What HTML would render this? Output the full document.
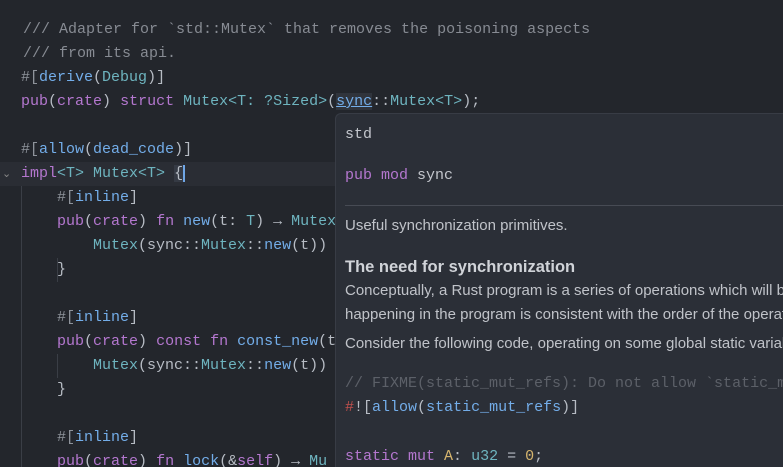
<html style="overflow:hidden;height:467px"><head><style>
body{margin:0;width:783px;height:467px;background:#23262c;overflow:hidden;position:relative;font-family:"Liberation Mono",monospace;font-size:15px;color:#c9ccd2}
.l{position:absolute;left:21px;height:24px;line-height:24px;white-space:pre}
.k{color:#b477cf}.t{color:#6eb4bf}.f{color:#73ade9}.c{color:#878b93}.a{color:#8e939b}.p{color:#b7bcc4}
.hl{position:absolute;left:0;top:162px;width:783px;height:24px;background:#2a2d34}
.g{position:absolute;width:1px;background:#3a3e46}
#pop{position:absolute;left:335px;top:113px;width:447px;height:354px;background:#2b2f37;border:1px solid #383c45;border-bottom:none;border-right:none;border-radius:6px 0 0 0;color:#c3c6cc;overflow:hidden}
#pop .m{position:absolute;left:9px;white-space:pre;line-height:24px}
#pop .s{position:absolute;left:9px;white-space:pre;font-family:"Liberation Sans",sans-serif;font-size:15px;line-height:24px;color:#c0c3c9}
</style></head><body>
<div class="hl"></div>
<div class="g" style="left:21px;top:186px;height:281px"></div>
<div class="g" style="left:57px;top:258px;height:24px"></div>
<div class="g" style="left:57px;top:354px;height:24px"></div>
<div style="position:absolute;left:2px;top:167px;color:#888;font-size:11px">⌄</div>
<div class="l c" style="top:18px;left:23px">/// Adapter for `std::Mutex` that removes the poisoning aspects</div>
<div class="l c" style="top:42px;left:23px">/// from its api.</div>
<div class="l" style="top:66px"><span class="a">#[</span><span class="f">derive</span><span class="p">(</span><span class="t">Debug</span><span class="p">)]</span></div>
<div class="l" style="top:90px"><span class="k">pub</span><span class="p">(</span><span class="k">crate</span><span class="p">) </span><span class="k">struct</span> <span class="t">Mutex&lt;T: ?Sized&gt;</span><span class="p">(</span><span style="text-decoration:underline;background:#30343c" class="f">sync</span><span class="p">::</span><span class="t">Mutex&lt;T&gt;</span><span class="p">);</span></div>
<div class="l" style="top:138px"><span class="a">#[</span><span class="f">allow</span><span class="p">(</span><span class="f">dead_code</span><span class="p">)]</span></div>
<div class="l" style="top:162px"><span class="k">impl</span><span class="t">&lt;T&gt; Mutex&lt;T&gt;</span> <span class="p" style="background:#353a44;border-right:2px solid #6fa6e6">{</span></div>
<div class="l" style="top:186px;left:57px"><span class="a">#[</span><span class="f">inline</span><span class="p">]</span></div>
<div class="l" style="top:210px;left:57px"><span class="k">pub</span><span class="p">(</span><span class="k">crate</span><span class="p">) </span><span class="k">fn</span> <span class="f">new</span><span class="p">(t: </span><span class="t">T</span><span class="p">) → </span><span class="t">Mutex</span></div>
<div class="l" style="top:234px;left:93px"><span class="t">Mutex</span><span class="p">(sync::</span><span class="t">Mutex</span><span class="p">::</span><span class="f">new</span><span class="p">(t))</span></div>
<div class="l p" style="top:258px;left:57px">}</div>
<div class="l" style="top:306px;left:57px"><span class="a">#[</span><span class="f">inline</span><span class="p">]</span></div>
<div class="l" style="top:330px;left:57px"><span class="k">pub</span><span class="p">(</span><span class="k">crate</span><span class="p">) </span><span class="k">const fn</span> <span class="f">const_new</span><span class="p">(t</span></div>
<div class="l" style="top:354px;left:93px"><span class="t">Mutex</span><span class="p">(sync::</span><span class="t">Mutex</span><span class="p">::</span><span class="f">new</span><span class="p">(t))</span></div>
<div class="l p" style="top:378px;left:57px">}</div>
<div class="l" style="top:426px;left:57px"><span class="a">#[</span><span class="f">inline</span><span class="p">]</span></div>
<div class="l" style="top:450px;left:57px;height:17px;overflow:hidden"><span class="k">pub</span><span class="p">(</span><span class="k">crate</span><span class="p">) </span><span class="k">fn</span> <span class="f">lock</span><span class="p">(&amp;</span><span class="k">self</span><span class="p">) → </span><span class="t">Mu</span></div>
<div id="pop">
<div class="m" style="top:9px">std</div>
<div class="m" style="top:50px"><span class="k">pub mod</span> sync</div>
<div style="position:absolute;left:9px;right:0;top:91px;height:1px;background:#474b54"></div>
<div class="s" style="top:100px">Useful synchronization primitives.</div>
<div class="s" style="top:141px;font-weight:bold;font-size:16.5px;color:#d0d3d8">The need for synchronization</div>
<div class="s" style="top:165px">Conceptually, a Rust program is a series of operations which will be</div>
<div class="s" style="top:189px">happening in the program is consistent with the order of the operations</div>
<div class="s" style="top:218px">Consider the following code, operating on some global static variables</div>
<div class="m c" style="top:258px;color:#5c6068">// FIXME(static_mut_refs): Do not allow `static_mut</div>
<div class="m" style="top:282px"><span style="color:#c0504d">#</span><span class="p">![</span><span class="f">allow</span><span class="p">(</span><span class="f">static_mut_refs</span><span class="p">)]</span></div>
<div class="m" style="top:331px"><span class="k">static mut</span> <span style="color:#d6b56e">A</span><span class="p">: </span><span class="t">u32</span><span class="p"> = </span><span style="color:#d6b56e">0</span><span class="p">;</span></div>
</div>
</body></html>
